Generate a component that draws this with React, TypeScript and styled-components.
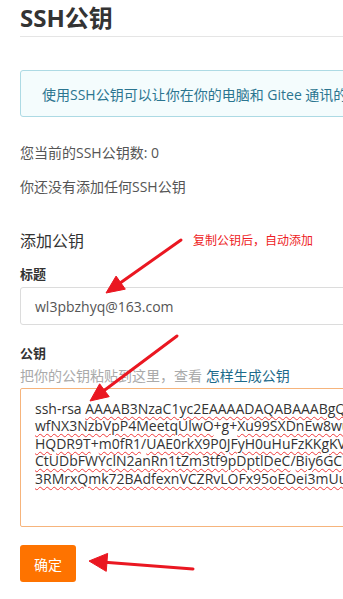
import styled, { createGlobalStyle } from "styled-components";

const GlobalStyle = createGlobalStyle`
  html, body {
    margin: 0;
    padding: 0;
    background: #fff;
    overflow: hidden;
  }
  body {
    font-family: "Open Sans", "Noto Sans CJK SC", sans-serif;
    color: #333;
  }
`;

const Viewport = styled.div`
  position: relative;
  width: 343px;
  height: 599px;
  overflow: hidden;
`;

const Page = styled.div`
  width: 720px;
  padding-left: 20px;
`;

const Title = styled.h1`
  margin: 0;
  padding: 3px 0 3px;
  font-size: 24px;
  line-height: 30px;
  font-weight: 700;
  color: #333;
  border-bottom: 1px solid #e5e5e5;
`;

const InfoBox = styled.div`
  margin-top: 33px;
  padding: 15px 21px 13px;
  border: 1px solid #addae4;
  border-radius: 3px;
  background: #f4fcfd;
  color: #2b7590;
  font-size: 14px;
  line-height: 17px;
  white-space: nowrap;
`;

const Text = styled.p<{ $top: number }>`
  margin: ${(p) => p.$top}px 0 0;
  font-size: 14px;
  line-height: 20px;
  color: #555;
`;

const Heading = styled.h2`
  display: flex;
  align-items: center;
  margin: 33px 0 0;
  font-size: 16px;
  line-height: 22px;
  font-weight: 400;
  color: #333;
`;

const Note = styled.span`
  margin-left: 109px;
  font-size: 12px;
  color: #ee1c25;
`;

const Label = styled.label<{ $top: number }>`
  display: block;
  margin-top: ${(p) => p.$top}px;
  font-size: 13px;
  line-height: 20px;
  font-weight: 700;
  color: #333;
`;

const Input = styled.div`
  box-sizing: border-box;
  margin-top: 3px;
  height: 38px;
  padding: 0 14px;
  display: flex;
  align-items: center;
  border: 1px solid #dcdcdc;
  border-radius: 3px;
  font-size: 14px;
  color: #555;
`;

const Hint = styled.p`
  margin: 3px 0 0;
  font-size: 14px;
  line-height: 20px;
  color: #aaa;

  a {
    color: #1d6a8a;
    text-decoration: none;
  }
`;

const KeyBox = styled.div`
  box-sizing: border-box;
  margin-top: 2px;
  height: 139px;
  padding: 11px 14px;
  border: 1px solid #f6b47c;
  border-radius: 2px;
  font-size: 14px;
  line-height: 17.4px;
  color: #333;
  white-space: pre;
`;

const KeyLine = styled.div`
  height: 17.4px;
`;

const Wavy = styled.span`
  text-decoration: underline wavy #f03a3a;
  text-decoration-thickness: 1px;
  text-underline-offset: 2px;
`;

const Submit = styled.button`
  margin-top: 18px;
  width: 56px;
  height: 37px;
  border: none;
  border-radius: 3px;
  background: #fe7300;
  color: #fff;
  font-family: inherit;
  font-size: 14px;
`;

const Overlay = styled.svg`
  position: absolute;
  left: 0;
  top: 0;
  pointer-events: none;
`;

type ArrowProps = { x1: number; y1: number; x2: number; y2: number; half?: number };

const Arrow = ({ x1, y1, x2, y2, half = 8 }: ArrowProps) => {
  const dx = x2 - x1;
  const dy = y2 - y1;
  const len = Math.hypot(dx, dy);
  const ux = dx / len;
  const uy = dy / len;
  const bx = x2 - ux * 18;
  const by = y2 - uy * 18;
  const nx = -uy;
  const ny = ux;
  const pts = `${x2},${y2} ${bx + nx * half},${by + ny * half} ${bx - nx * half},${by - ny * half}`;
  return (
    <g fill="#ea1721" stroke="#ea1721">
      <line x1={x1} y1={y1} x2={bx + ux * 2} y2={by + uy * 2} strokeWidth={3} strokeLinecap="round" />
      <polygon points={pts} strokeWidth={1} strokeLinejoin="round" />
    </g>
  );
};

const keyLines: string[][] = [
  ["ssh-rsa ", "~AAAAB3NzaC1yc2EAAAADAQABAAABgQC7vXq2LmPz"],
  ["~wfNX3NzbVpP4MeetqUlwO", "+g+", "~Xu99SXDnEw8wuQ3hT0yKc"],
  ["~HQDR9T", "+", "~m0fR1", "/", "~UAE0rkX9P0JFyH0uHuFzKKgKVpZr"],
  ["~CtUDbFWYclN2anRn1tZm3tf9pDptlDeC", "/", "~Biy6GCkI0aWq"],
  ["~3RMrxQmk72BAdfexnVCZRvLOFx95oEOei3mUuKS8dPw"],
];

export default function App() {
  return (
    <Viewport>
      <GlobalStyle />
      <Page>
        <Title>SSH公钥</Title>
        <InfoBox>使用SSH公钥可以让你在你的电脑和 Gitee 通讯的时候使用安全连接（Git的Remote要使用SSH地址）</InfoBox>
        <Text $top={26}>您当前的SSH公钥数: 0</Text>
        <Text $top={14}>你还没有添加任何SSH公钥</Text>
        <Heading>
          添加公钥
          <Note>复制公钥后，自动添加</Note>
        </Heading>
        <Label $top={12}>标题</Label>
        <Input>wl3pbzhyq@163.com</Input>
        <Label $top={18}>公钥</Label>
        <Hint>
          把你的公钥粘贴到这里，查看 <a href="#">怎样生成公钥</a>
        </Hint>
        <KeyBox>
          {keyLines.map((line, i) => (
            <KeyLine key={i}>
              {line.map((part, j) =>
                part.startsWith("~") ? <Wavy key={j}>{part.slice(1)}</Wavy> : <span key={j}>{part}</span>
              )}
            </KeyLine>
          ))}
        </KeyBox>
        <Submit type="button">确定</Submit>
      </Page>
      <Overlay width={343} height={599} viewBox="0 0 343 599">
        <Arrow x1={181} y1={240} x2={106} y2={293} />
        <Arrow x1={177} y1={336} x2={90} y2={401} />
        <Arrow x1={193} y1={569} x2={89} y2={561} half={9} />
      </Overlay>
    </Viewport>
  );
}
